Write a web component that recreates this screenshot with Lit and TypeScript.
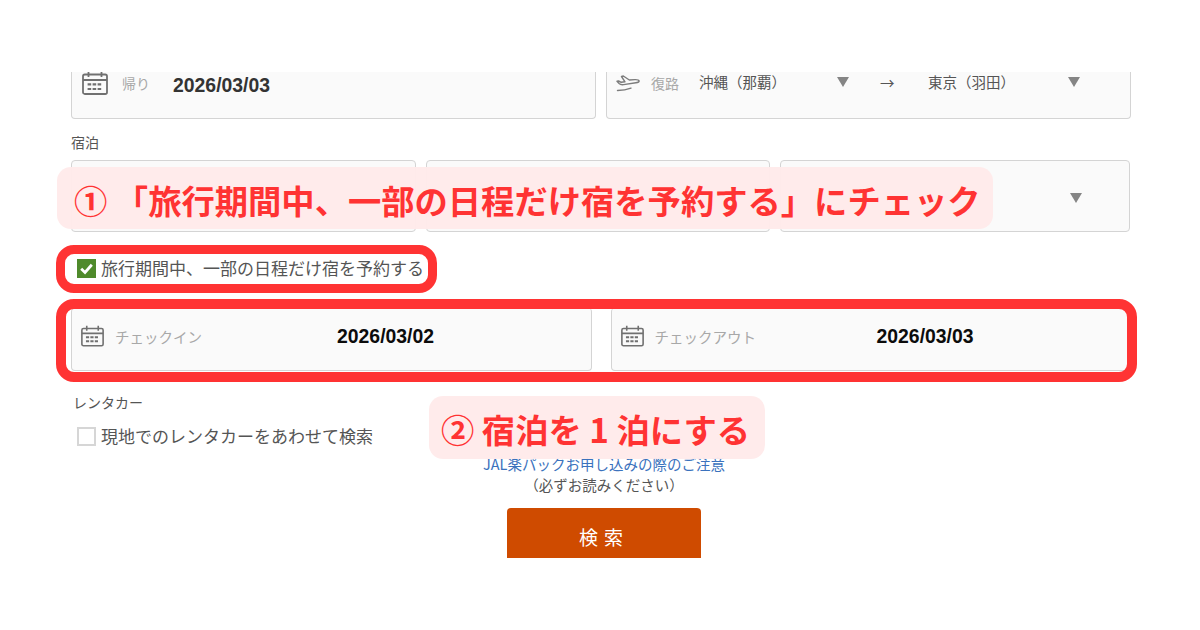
import { LitElement, html, css } from "lit";
import { customElement } from "lit/decorators.js";

const calendar = (w: number, h: number) => html`<svg class="cal" width=${w} height=${h} viewBox="0 0 26 24" fill="none" stroke="#707070" stroke-width="1.8">
  <rect x="1" y="3.5" width="24" height="19.5" rx="1.8"/>
  <path d="M1 9h24M6.5 0.5v5.5M19.5 0.5v5.5"/>
  <path stroke-width="2.2" stroke-dasharray="3.6 1.4" d="M5.6 13.4h15M5.6 18h15"/>
</svg>`;

const plane = html`<svg class="plane" width="24" height="17" viewBox="0 0 24 17" fill="none" stroke="#7c7c7c" stroke-width="1.4" stroke-linejoin="round" stroke-linecap="round">
  <path d="M5.5 1.5 7.3 1l6 4 5.6-.4c2-.1 4 .6 4.2 1.4.1.9-1.6 1.6-3.2 1.8L7.6 9.6C5.6 9.9 4 9.4 3.1 8.5L1 6.3 2.6 6l2.6 1.3 3.8-.5z"/>
  <path d="M1.5 15.5c4.5 0 9-.6 13.5-2.4"/>
</svg>`;

const caret = html`<span class="caret"></span>`;

@customElement("app-root")
export class AppRoot extends LitElement {
  static styles = css`
    :host {
      display: block;
      width: 1200px;
      height: 630px;
      position: relative;
      overflow: hidden;
      background: #fff;
      font-family: "Noto Sans CJK JP", "Liberation Sans", sans-serif;
      color: #555;
    }
    :host::before {
      content: "";
      display: block;
      height: 72px;
    }
    .clip {
      height: 486px;
      overflow: hidden;
      padding: 0 69px 0 71px;
      display: flex;
      flex-direction: column;
    }
    .row {
      display: flex;
      gap: 10px;
    }
    .card {
      box-sizing: border-box;
      background: #fafafa;
      border: 1px solid #d4d4d4;
      border-radius: 4px;
      display: flex;
      align-items: flex-start;
    }
    .top {
      height: 47px;
      border-top: 0;
      border-radius: 0 0 4px 4px;
      flex: 0 0 525px;
    }
    .cal {
      flex: none;
      display: block;
    }
    .top .cal {
      margin: 0 0 0 10px;
      position: relative;
      top: -1px;
    }
    .lbl {
      color: #a8a8a8;
      font-size: 14px;
      line-height: 20px;
    }
    .date {
      font-family: "Liberation Sans", sans-serif;
      font-weight: 700;
      font-size: 19.4px;
      line-height: 24px;
      color: #222;
    }
    .return .lbl {
      margin-left: 14px;
      margin-top: 1px;
    }
    .return .date {
      margin-left: 23px;
      margin-top: 1px;
      color: #333;
    }
    .flight {
      padding-left: 9px;
    }
    .flight .plane {
      margin-top: 3px;
    }
    .flight .lbl {
      margin-left: 11px;
      margin-top: 1px;
    }
    .port {
      font-size: 14.5px;
      line-height: 20px;
      margin-top: 0;
      color: #555;
      white-space: nowrap;
    }
    .p1 {
      margin-left: 20px;
      width: 138px;
    }
    .p2 {
      width: 140px;
    }
    .arrow {
      width: 48px;
      font-size: 14.5px;
      line-height: 20px;
      margin-top: 1px;
    }
    .caret {
      width: 0;
      height: 0;
      border-left: 6.5px solid transparent;
      border-right: 6.5px solid transparent;
      border-top: 10px solid #858585;
      flex: none;
    }
    .flight .caret {
      margin-top: 5px;
    }
    .gap-c {
      width: 31px;
      flex: none;
    }
    .section {
      font-size: 14px;
      line-height: 20px;
      color: #555;
    }
    .stay-label {
      margin-top: 13px;
    }
    .stay {
      margin-top: 8px;
      display: grid;
      grid-template-columns: 345px 344px 350px;
    }
    .stay .card {
      height: 72px;
      justify-content: flex-end;
      align-items: center;
      padding: 4px 47px 0 0;
    }
    .check {
      display: flex;
      align-items: center;
      gap: 5px;
      margin-left: 6px;
      font-size: 17px;
      line-height: 24px;
      color: #555;
      white-space: nowrap;
    }
    .box {
      box-sizing: border-box;
      width: 19px;
      height: 19px;
      flex: none;
      display: block;
    }
    .box.off {
      background: #fff;
      border: 2px solid #d6d6d6;
    }
    .stay-check {
      margin-top: 24px;
    }
    .dates {
      margin-top: 28px;
      gap: 19px;
    }
    .dates .card {
      flex: 1 1 0;
      height: 63px;
      border-top: 0;
      border-radius: 4px;
      align-items: center;
      padding: 0 0 7px 9px;
    }
    .dates .lbl {
      margin: 3px 0 0 11px;
      width: 222px;
      font-size: 14.5px;
    }
    .dates .date {
      color: #0c0c0c;
    }
    .rent-label {
      margin: 21px 0 0 2px;
    }
    .rent-check {
      margin-top: 12px;
    }
    .notes {
      margin-top: 5px;
      text-align: center;
      font-size: 14.5px;
      line-height: 21px;
      padding-left: 6px;
    }
    .notes a {
      color: #3b72bd;
      display: block;
    }
    .notes span {
      display: block;
      color: #555;
    }
    .search {
      align-self: center;
      margin: 13px 0 0 6px;
      width: 194px;
      height: 57px;
      box-sizing: border-box;
      flex: none;
      padding: 0;
      background: #cf4b00;
      border: 0;
      border-radius: 4px 4px 0 0;
      color: #fff;
      font-family: inherit;
      font-size: 19px;
      letter-spacing: 6px;
    }
    .ring {
      position: absolute;
      box-sizing: border-box;
      border: 10px solid #ff3333;
      border-radius: 18px;
      pointer-events: none;
    }
    .ring.a {
      left: 56px;
      top: 245px;
      width: 381px;
      height: 48px;
      border-width: 9px;
    }
    .ring.b {
      left: 56px;
      top: 299px;
      width: 1081px;
      height: 83px;
    }
    .note {
      position: absolute;
      background: rgba(255, 234, 234, 0.96);
      color: #ff3333;
      border-radius: 14px;
      font-weight: 700;
      font-size: 33.3px;
      line-height: 65px;
      white-space: nowrap;
      box-sizing: border-box;
    }
    .note.a {
      left: 57px;
      top: 167px;
      width: 936px;
      height: 62px;
      padding-left: 17px;
    }
    .note.b {
      left: 429px;
      top: 396px;
      width: 336px;
      height: 63px;
      padding-left: 12px;
    }
  `;

  render() {
    return html`
      <div class="clip">
        <div class="row">
          <div class="card top return">
            ${calendar(26, 24)}
            <span class="lbl">帰り</span>
            <span class="date">2026/03/03</span>
          </div>
          <div class="card top flight">
            ${plane}
            <span class="lbl">復路</span>
            <span class="port p1">沖縄（那覇）</span>
            ${caret}
            <span class="gap-c"></span>
            <span class="arrow">→</span>
            <span class="port p2">東京（羽田）</span>
            ${caret}
          </div>
        </div>

        <div class="section stay-label">宿泊</div>
        <div class="row stay">
          <div class="card"></div>
          <div class="card"></div>
          <div class="card">${caret}</div>
        </div>

        <label class="check stay-check">
          <svg class="box" viewBox="0 0 19 19">
            <rect width="19" height="19" fill="#4f8a2b"/>
            <path d="M4.2 9.8 8 13.4l6.8-7.6" fill="none" stroke="#fff" stroke-width="2.8"/>
          </svg>
          旅行期間中、一部の日程だけ宿を予約する
        </label>

        <div class="row dates">
          <div class="card">
            ${calendar(23, 22)}
            <span class="lbl">チェックイン</span>
            <span class="date">2026/03/02</span>
          </div>
          <div class="card">
            ${calendar(23, 22)}
            <span class="lbl">チェックアウト</span>
            <span class="date">2026/03/03</span>
          </div>
        </div>

        <div class="section rent-label">レンタカー</div>
        <label class="check rent-check">
          <span class="box off"></span>
          現地でのレンタカーをあわせて検索
        </label>

        <div class="notes">
          <a>JAL楽パックお申し込みの際のご注意</a>
          <span>（必ずお読みください）</span>
        </div>
        <button class="search">検索</button>
      </div>

      <div class="ring a"></div>
      <div class="ring b"></div>
      <div class="note a">① 「旅行期間中、一部の日程だけ宿を予約する」にチェック</div>
      <div class="note b">② 宿泊を 1 泊にする</div>
    `;
  }
}
